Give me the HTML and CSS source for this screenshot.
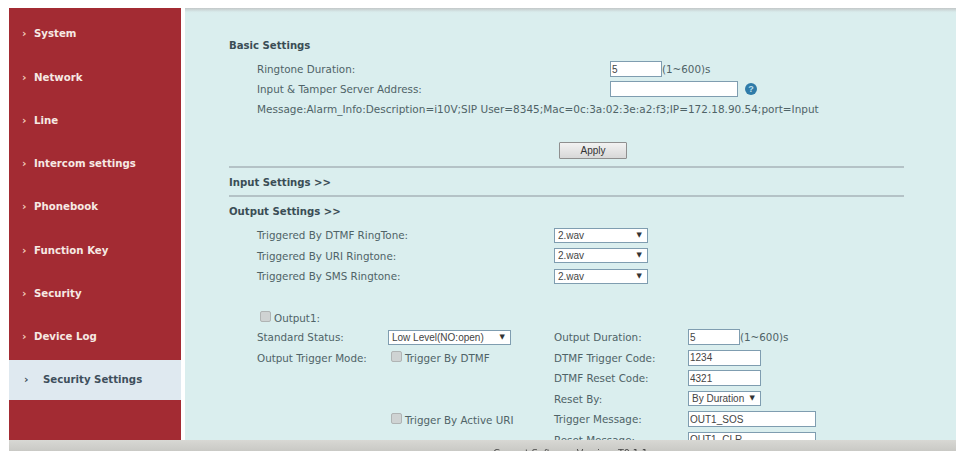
FILE: index.html
```html
<!DOCTYPE html>
<html lang="en">
<head>
<meta charset="utf-8">
<title>Security Settings</title>
<link rel="stylesheet" href="styles.css">
</head>
<body>
<div class="page">
  <div class="columns">
    <nav class="sidebar">
      <a class="nav-item"><span class="chev">›</span>System</a>
      <a class="nav-item"><span class="chev">›</span>Network</a>
      <a class="nav-item"><span class="chev">›</span>Line</a>
      <a class="nav-item"><span class="chev">›</span>Intercom settings</a>
      <a class="nav-item"><span class="chev">›</span>Phonebook</a>
      <a class="nav-item"><span class="chev">›</span>Function Key</a>
      <a class="nav-item"><span class="chev">›</span>Security</a>
      <a class="nav-item"><span class="chev">›</span>Device Log</a>
      <a class="nav-item active"><span class="chev">›</span>Security Settings</a>
    </nav>
    <main class="content">
      <h2 class="heading first">Basic Settings</h2>
      <div class="basic">
        <label class="lbl">Ringtone Duration:</label>
        <div class="field"><input class="inp w52" value="5"><span class="lbl">(1~600)s</span></div>
        <label class="lbl">Input &amp; Tamper Server Address:</label>
        <div class="field"><input class="inp w128"><span class="help">?</span></div>
      </div>
      <p class="lbl message">Message:Alarm_Info:Description=i10V;SIP User=8345;Mac=0c:3a:02:3e:a2:f3;IP=172.18.90.54;port=Input</p>
      <div class="apply-row"><button class="apply">Apply</button></div>
      <hr class="rule">
      <h2 class="heading mid">Input Settings &gt;&gt;</h2>
      <hr class="rule">
      <h2 class="heading">Output Settings &gt;&gt;</h2>
      <div class="ring">
        <label class="lbl">Triggered By DTMF RingTone:</label>
        <span class="sel w94"><select><option>2.wav</option></select></span>
        <label class="lbl">Triggered By URI Ringtone:</label>
        <span class="sel w94"><select><option>2.wav</option></select></span>
        <label class="lbl">Triggered By SMS Ringtone:</label>
        <span class="sel w94"><select><option>2.wav</option></select></span>
      </div>
      <div class="output">
        <label class="lbl span-all check-label top"><input type="checkbox" class="chk">Output1:</label>

        <label class="lbl">Standard Status:</label>
        <span class="sel w123"><select><option>Low Level(NO:open)</option></select></span>
        <label class="lbl">Output Duration:</label>
        <div class="field"><input class="inp w52" value="5"><span class="lbl">(1~600)s</span></div>

        <label class="lbl">Output Trigger Mode:</label>
        <label class="lbl check-label ind"><input type="checkbox" class="chk">Trigger By DTMF</label>
        <label class="lbl">DTMF Trigger Code:</label>
        <div class="field"><input class="inp w73" value="1234"></div>

        <span></span><span></span>
        <label class="lbl">DTMF Reset Code:</label>
        <div class="field"><input class="inp w73" value="4321"></div>

        <span></span><span></span>
        <label class="lbl">Reset By:</label>
        <span class="sel w73"><select><option>By Duration</option></select></span>

        <span></span>
        <label class="lbl check-label ind"><input type="checkbox" class="chk">Trigger By Active URI</label>
        <label class="lbl">Trigger Message:</label>
        <div class="field"><input class="inp w128" value="OUT1_SOS"></div>

        <span></span><span></span>
        <label class="lbl">Reset Message:</label>
        <div class="field"><input class="inp w128" value="OUT1_CLR"></div>
      </div>
    </main>
  </div>
  <footer class="footer">Current Software Version: T0.1.1</footer>
</div>
</body>
</html>
```
FILE: styles.css
```css
* { box-sizing: border-box; }
html, body { margin: 0; height: 456px; overflow: hidden; background: #fff; }
body { font-family: "DejaVu Sans", Verdana, sans-serif; }
.page { padding: 8px 11px 0 9px; filter: blur(0.3px); }
.columns { display: flex; gap: 4px; height: 432px; }

.sidebar {
  width: 172px; flex: none; background: #a32b33;
  padding-top: 5.9px; display: flex; flex-direction: column; gap: 3.25px;
}
.nav-item {
  height: 40px; display: flex; align-items: center;
  padding-left: 13px; color: #f6e9e4; font-size: 10.2px; font-weight: bold;
}
.chev { width: 12px; font-size: 11px; color: #f0cdbb; font-weight: bold; }
.nav-item.active { background: #dfe9f0; color: #3e4f5c; padding-left: 15px; }
.active .chev { width: 19px; color: #3e4f5c; }

.content {
  flex: 1; overflow: hidden; padding: 0 52px 0 44px;
  background: linear-gradient(#c3c7c8 0, #d9ecec 4px, #daeeee 6px);
}
.heading { margin: 0; height: 29px; line-height: 29px; font-size: 10.15px; font-weight: bold; color: #3a4d55; }
.heading.first { margin-top: 22px; height: 30px; line-height: 32px; }
.heading.mid { height: 27px; line-height: 30px; }

.lbl { font-size: 10.35px; color: #4f6367; white-space: nowrap; }
.basic { display: grid; grid-template-columns: 353px auto; grid-auto-rows: 20px; align-items: center; padding-left: 28px; margin-top: -1px; }
.field { display: flex; align-items: center; }
.message { margin: 0; padding-left: 28px; height: 20px; line-height: 20px; font-size: 10.48px; }
.apply-row { padding: 20px 0 0 330px; height: 47px; }
.apply {
  width: 68px; height: 17px; padding: 0; font: 10px "Liberation Sans", sans-serif; color: #333;
  border: 1px solid #8f8f8f; border-radius: 1px; background: linear-gradient(#f2f2f2, #d8d8d8);
}
.rule { margin: 0; height: 2px; border: 0; background: #b4c2c6; }
.inp {
  height: 16px; padding: 0 1px; font: 10px "Liberation Sans", sans-serif; color: #444;
  background: #fff; border: 1px solid #7f9db0; border-radius: 0; outline: 0;
}
.w52 { width: 52px; }
.w73 { width: 73px; }
.w94 { width: 94px; }
.w123 { width: 123px; }
.w128 { width: 128px; }
.help {
  width: 12px; height: 12px; margin-left: 7px; border-radius: 50%;
  background: #2f7ba8; color: #bfe0f0; font: bold 9px/12px "Liberation Sans", sans-serif; text-align: center;
}
.sel { position: relative; display: block; height: 15px; }
.sel select {
  appearance: none; display: block; width: 100%; height: 100%; padding: 0 0 0 3px; margin: 0;
  font: 10px "Liberation Sans", sans-serif; color: #444; background: #fff;
  border: 1px solid #7f9db0; border-radius: 0; outline: 0;
}
.sel::after {
  content: "▼"; position: absolute; right: 6px; top: 3px; font-size: 7px; line-height: 9px; color: #333; pointer-events: none;
}
.ring { display: grid; grid-template-columns: 297px auto; grid-auto-rows: 20.5px; align-items: center; margin-top: -1px; padding-left: 28px; }
.output {
  display: grid; grid-template-columns: 131px 166px 134px auto; grid-auto-rows: 20.5px;
  align-items: center; padding: 19.9px 0 0 28px;
}
.span-all { grid-column: 1 / -1; }
.check-label { display: flex; align-items: center; }
.top { padding: 3px 0 0 3px; }
.ind { padding: 1px 0 0 3px; }
.chk {
  appearance: none; width: 11px; height: 11px; margin: -3px 3px 0 0;
  background: #cfd3d3; border: 1px solid #b0b4b4; border-radius: 2px;
}
.footer {
  height: 11px; overflow: hidden; padding-left: 176px; text-align: center; font-size: 9.5px; line-height: 25px; color: #444;
  background: linear-gradient(#d8d8d4, #c9c9c5);
}
```
